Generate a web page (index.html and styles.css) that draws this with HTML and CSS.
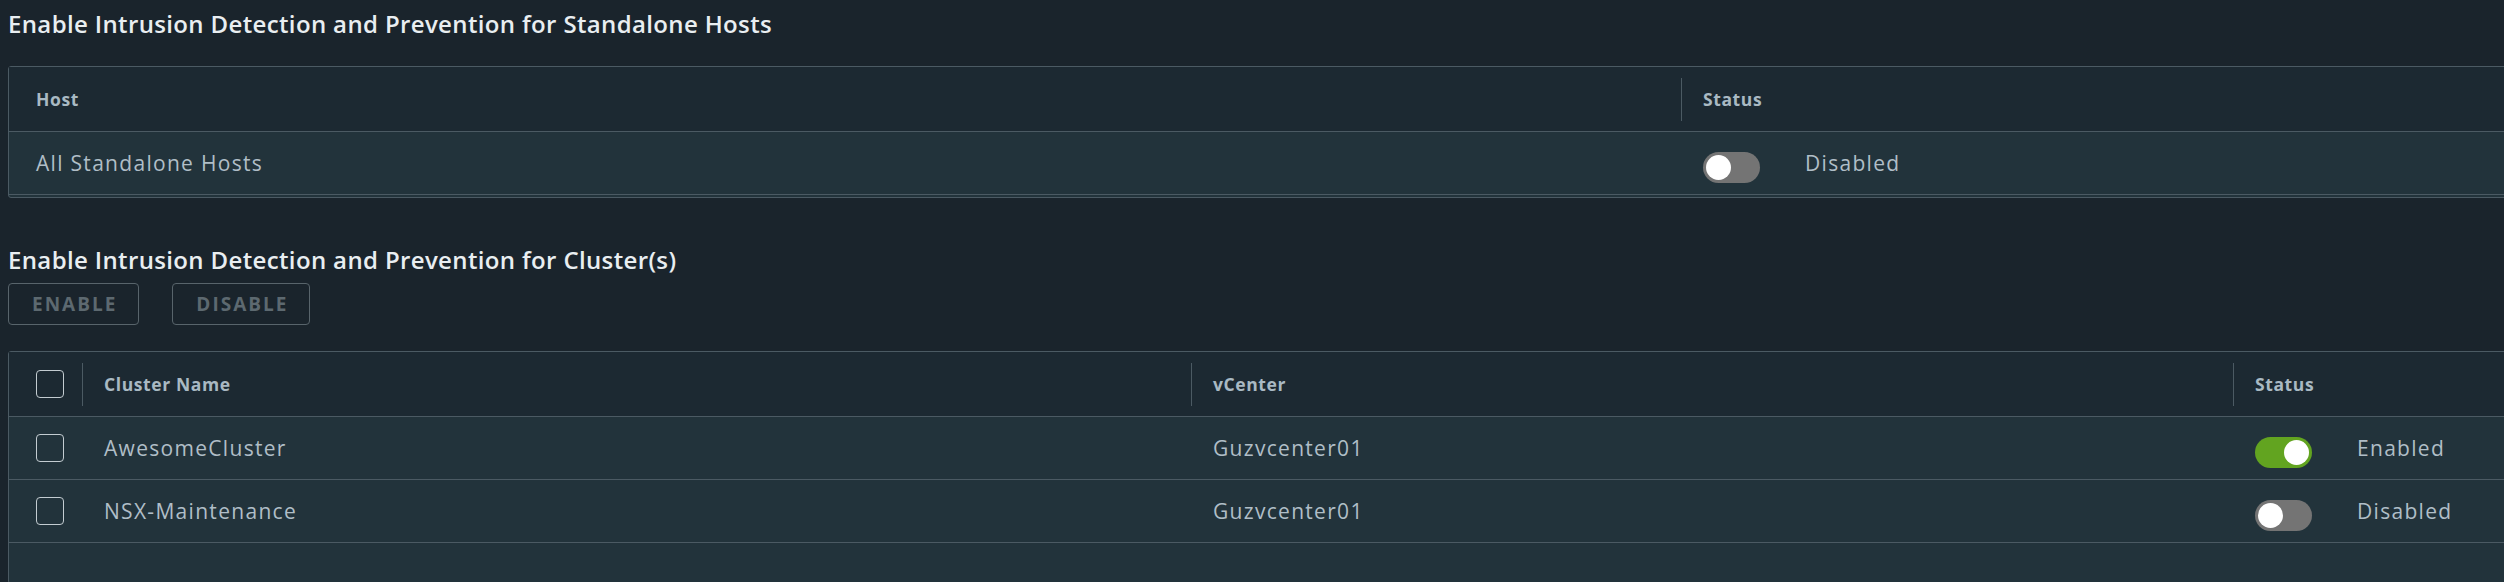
FILE: index.html
```html
<!DOCTYPE html>
<html lang="en">
<head>
<meta charset="utf-8">
<title>Intrusion Detection and Prevention</title>
<link rel="stylesheet" href="styles.css">
</head>
<body>
<main class="page">
  <h2 class="section-title">Enable Intrusion Detection and Prevention for Standalone Hosts</h2>
  <div class="grid hosts">
    <div class="row head">
      <div class="cell first">Host</div>
      <div class="cell sep">Status</div>
    </div>
    <div class="row body-row">
      <div class="cell first text">All Standalone Hosts</div>
      <div class="cell text">
        <span class="toggle off"><span class="knob"></span></span>
        <span class="status-text">Disabled</span>
      </div>
    </div>
  </div>

  <h2 class="section-title second">Enable Intrusion Detection and Prevention for Cluster(s)</h2>
  <div class="actions">
    <button class="btn" type="button">Enable</button>
    <button class="btn" type="button">Disable</button>
  </div>

  <div class="grid clusters">
    <div class="row head">
      <div class="cell first"><span class="checkbox"></span></div>
      <div class="cell sep">Cluster Name</div>
      <div class="cell sep">vCenter</div>
      <div class="cell sep">Status</div>
    </div>
    <div class="row body-row">
      <div class="cell first"><span class="checkbox"></span></div>
      <div class="cell text">AwesomeCluster</div>
      <div class="cell text">Guzvcenter01</div>
      <div class="cell text">
        <span class="toggle on"><span class="knob"></span></span>
        <span class="status-text">Enabled</span>
      </div>
    </div>
    <div class="row body-row">
      <div class="cell first"><span class="checkbox"></span></div>
      <div class="cell text">NSX-Maintenance</div>
      <div class="cell text">Guzvcenter01</div>
      <div class="cell text">
        <span class="toggle off"><span class="knob"></span></span>
        <span class="status-text">Disabled</span>
      </div>
    </div>
    <div class="filler"></div>
  </div>
</main>
</body>
</html>
```

FILE: styles.css
```css
html, body {
  margin: 0;
  padding: 0;
  overflow: hidden;
  background: #1a242c;
}

body {
  font-family: "Open Sans", "Liberation Sans", sans-serif;
  color: #b0bec7;
}

.page {
  padding-left: 8px;
}

.section-title {
  margin: 8px 0 26px;
  font-size: 24px;
  line-height: 32px;
  font-weight: 600;
  letter-spacing: 0.36px;
  color: #e9eef1;
}

.section-title.second {
  margin: 46px 0 7px;
}

.actions {
  display: flex;
  gap: 33px;
  margin-bottom: 26px;
}

.btn {
  box-sizing: border-box;
  height: 42px;
  padding: 0 21px 0 23px;
  border: 1px solid #58646b;
  border-radius: 4px;
  background: transparent;
  color: #5d6970;
  font-family: "Open Sans", "Liberation Sans", sans-serif;
  font-size: 19px;
  font-weight: 700;
  letter-spacing: 2px;
  text-transform: uppercase;
}

.grid {
  box-sizing: border-box;
  width: calc(100% + 40px);
  border: 1px solid #4b5a63;
  border-radius: 3px;
  background: #22333b;
}

.hosts {
  padding-bottom: 2px;
}

.row {
  display: grid;
  border-bottom: 1px solid #4b5a63;
}

.hosts .row {
  grid-template-columns: 1672px 1fr;
}

.clusters .row {
  grid-template-columns: 73px 1109px 1042px 1fr;
}

.head {
  height: 64px;
  background: #1c2932;
  font-size: 17.5px;
  font-weight: 700;
  letter-spacing: 0.6px;
  color: #a9b9c3;
}

.body-row {
  height: 62px;
}

.cell {
  display: flex;
  align-items: center;
  padding-left: 22px;
  white-space: nowrap;
}

.cell.first {
  padding-left: 27px;
}

.cell.sep {
  padding-left: 0;
}

.cell.sep::before {
  content: "";
  width: 1px;
  height: 43px;
  margin-right: 21px;
  background: #4b5a63;
}

.text {
  font-size: 21px;
  font-weight: 400;
  letter-spacing: 1.3px;
  color: #b0bec7;
}

.checkbox {
  box-sizing: border-box;
  width: 28px;
  height: 28px;
  border: 1px solid #c3ccd1;
  border-radius: 4px;
}

.toggle {
  box-sizing: border-box;
  display: flex;
  align-items: center;
  width: 57px;
  height: 31px;
  margin-top: 8px;
  padding: 0 3px;
  border-radius: 16px;
}

.toggle.off {
  background: #747474;
  justify-content: flex-start;
}

.toggle.on {
  background: #62a420;
  justify-content: flex-end;
}

.knob {
  width: 25px;
  height: 25px;
  border-radius: 50%;
  background: #ffffff;
}

.status-text {
  margin-left: 45px;
}

.filler {
  height: 40px;
}
```
